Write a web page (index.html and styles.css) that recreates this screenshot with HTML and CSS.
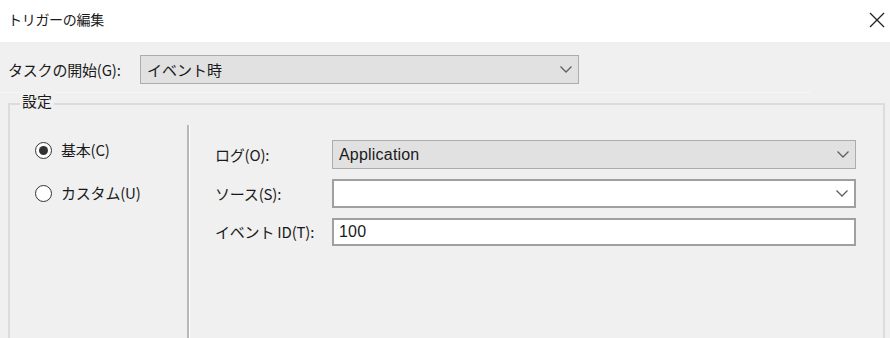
FILE: index.html
```html
<!DOCTYPE html>
<html lang="ja">
<head>
<meta charset="utf-8">
<link rel="stylesheet" href="styles.css">
</head>
<body>
<div class="dialog">
  <div class="titlebar">
    <span class="title">トリガーの編集</span>
    <svg class="close" width="16" height="16" viewBox="0 0 16 16"><path d="M1 1 L15 15 M15 1 L1 15" stroke="#222" stroke-width="1.3" fill="none"/></svg>
  </div>
  <div class="body">
    <div class="start-row">
      <span class="label start-label">タスクの開始(G):</span>
      <div class="combo combo-gray start-combo">
        <span class="combo-text">イベント時</span>
        <svg class="chev" width="12" height="7" viewBox="0 0 12 7"><path d="M0.5 0.5 L6 6 L11.5 0.5" stroke="#606060" stroke-width="1.3" fill="none"/></svg>
      </div>
    </div>
    <div class="faint-line"></div>
    <div class="group">
      <span class="legend">設定</span>
      <div class="group-inner">
        <div class="radios">
          <div class="radio-row">
            <span class="radio checked"><span class="dot"></span></span>
            <span class="label">基本(C)</span>
          </div>
          <div class="radio-row">
            <span class="radio"></span>
            <span class="label">カスタム(U)</span>
          </div>
        </div>
        <div class="divider"></div>
        <div class="form">
          <div class="form-row">
            <span class="label form-label">ログ(O):</span>
            <div class="combo combo-gray field">
              <span class="combo-text latin">Application</span>
              <svg class="chev" width="12" height="7" viewBox="0 0 12 7"><path d="M0.5 0.5 L6 6 L11.5 0.5" stroke="#606060" stroke-width="1.3" fill="none"/></svg>
            </div>
          </div>
          <div class="form-row">
            <span class="label form-label">ソース(S):</span>
            <div class="combo combo-white field">
              <span class="combo-text latin"></span>
              <svg class="chev" width="12" height="7" viewBox="0 0 12 7"><path d="M0.5 0.5 L6 6 L11.5 0.5" stroke="#606060" stroke-width="1.3" fill="none"/></svg>
            </div>
          </div>
          <div class="form-row">
            <span class="label form-label">イベント ID(T):</span>
            <div class="textbox field">
              <span class="combo-text latin">100</span>
            </div>
          </div>
        </div>
      </div>
    </div>
  </div>
</div>
</body>
</html>
```

FILE: styles.css
```css
* { box-sizing: border-box; }
html, body { margin: 0; padding: 0; }
body {
  width: 890px;
  height: 338px;
  overflow: hidden;
  font-family: "Noto Sans CJK JP", "Noto Sans", sans-serif;
  font-size: 15px;
  color: #1a1a1a;
  background: #f0f0f0;
}
.dialog { width: 890px; height: 338px; display: flex; flex-direction: column; overflow: hidden; }
.titlebar {
  flex: 0 0 42px;
  height: 42px;
  background: #ffffff;
  display: flex;
  align-items: center;
  justify-content: space-between;
  padding: 0 5px 4px 8px;
}
.title { font-size: 14px; line-height: 20px; letter-spacing: -0.3px; }
.close { display: block; margin-top: 2px; }
.body {
  flex: 1;
  min-height: 0;
  background: #f0f0f0;
  display: flex;
  flex-direction: column;
  overflow: hidden;
}
.start-row {
  flex: 0 0 auto;
  display: flex;
  align-items: center;
  margin-top: 13px;
  padding-left: 8px;
  height: 29px;
}
.label { font-size: 15px; line-height: 18px; letter-spacing: -0.2px; white-space: nowrap; }
.start-label { width: 132px; }
.combo, .textbox {
  display: flex;
  align-items: center;
  justify-content: space-between;
  border: 1px solid #adadad;
  padding: 0 6px 0 6px;
}
.start-combo { width: 439px; height: 29px; }
.combo-gray { background: #e1e1e1; }
.combo-white { background: #ffffff; border: 2px solid #a0a0a0; }
.textbox { background: #ffffff; border: 2px solid #a0a0a0; padding-left: 5px; }
.combo-text { font-size: 15px; line-height: 18px; }
.latin { font-family: "Liberation Sans", Arial, sans-serif; font-size: 16px; letter-spacing: 0.2px; }
.chev { display: block; }
.faint-line {
  flex: 0 0 1px;
  margin-top: 8px;
  width: 810px;
  height: 1px;
  background: #f6f6f6;
}
.group {
  flex: 1;
  margin: 10px 5px 0 8px;
  border: 2px solid #dcdcdc;
  border-bottom: none;
  padding-left: 10px;
  display: flex;
  flex-direction: column;
}
.legend {
  align-self: flex-start;
  font-size: 15px;
  line-height: 20px;
  margin-top: -14px;
  padding: 0 2px;
  background: #f0f0f0;
}
.group-inner { flex: 1; display: flex; margin-left: -10px; margin-top: 1px; }
.radios {
  width: 177px;
  padding: 29px 0 0 25px;
  display: flex;
  flex-direction: column;
  gap: 25px;
}
.radio-row { display: flex; align-items: center; gap: 9px; height: 18px; }
.radio {
  width: 17px;
  height: 17px;
  border-radius: 50%;
  border: 1px solid #333;
  background: #fff;
  display: flex;
  align-items: center;
  justify-content: center;
}
.dot { width: 9px; height: 9px; border-radius: 50%; background: #333; }
.divider {
  width: 3px;
  margin-top: 13px;
  background: #b8b8b8;
  border-right: 1px solid #ffffff;
}
.form {
  flex: 1;
  padding: 28px 27px 0 25px;
  display: flex;
  flex-direction: column;
  gap: 10px;
}
.form-row { display: flex; align-items: center; height: 29px; }
.form-row:last-child { height: 28px; }
.form-label { width: 117px; }
.field { flex: 1; height: 100%; }
```
